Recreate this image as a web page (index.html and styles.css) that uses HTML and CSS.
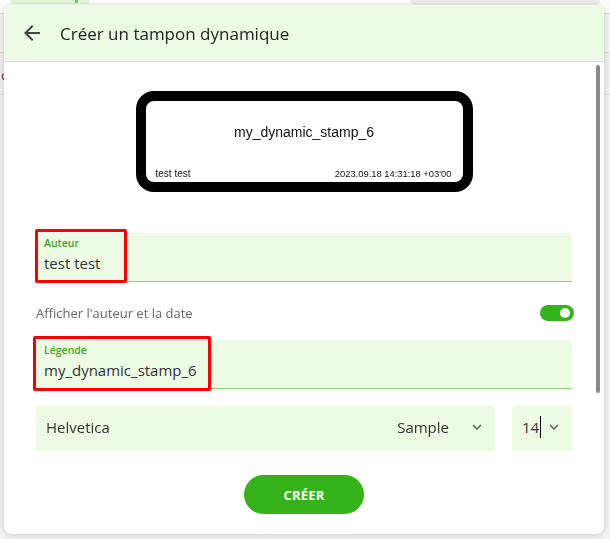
FILE: index.html
```html
<!DOCTYPE html>
<html lang="fr">
<head>
    <meta charset="UTF-8">
    <meta name="viewport" content="width=device-width, initial-scale=1.0">
    <title>Créer un tampon dynamique</title>
    <link rel="stylesheet" href="styles.css">
</head>
<body>
    <div class="page">
        <div class="top-strip">
            <span class="pill-green"><span class="dot"></span></span>
            <span class="pill-grey"></span>
        </div>
        <div class="toolbar"></div>
        <div class="subbar">c</div>
    </div>

    <div class="dialog">
        <header class="dialog-head">
            <svg class="back" width="24" height="24" viewBox="0 0 24 24">
                <path d="M20 11H7.83l5.59-5.59L12 4l-8 8 8 8 1.41-1.41L7.83 13H20v-2z" fill="#444"/>
            </svg>
            <h1>Créer un tampon dynamique</h1>
        </header>

        <div class="dialog-body">
            <div class="stamp">
                <div class="stamp-title">my_dynamic_stamp_6</div>
                <div class="stamp-foot">
                    <span>test test</span>
                    <span class="stamp-date">2023.09.18 14:31:18 +03'00</span>
                </div>
            </div>

            <div class="field">
                <span class="mark mark-author"></span>
                <label>Auteur</label>
                <div class="value">test test</div>
            </div>

            <div class="toggle-row">
                <span>Afficher l'auteur et la date</span>
                <span class="toggle"><span class="knob"></span></span>
            </div>

            <div class="field">
                <span class="mark mark-caption"></span>
                <label>Légende</label>
                <div class="value">my_dynamic_stamp_6</div>
            </div>

            <div class="font-row">
                <div class="select select-font">
                    <span class="grow">Helvetica</span>
                    <span class="sample">Sample</span>
                    <svg class="chev" width="10" height="6" viewBox="0 0 10 6"><polyline points="1,1 5,5 9,1" fill="none" stroke="#666" stroke-width="1.6"/></svg>
                </div>
                <div class="select select-size">
                    <span class="grow">14<span class="caret"></span></span>
                    <svg class="chev" width="10" height="6" viewBox="0 0 10 6"><polyline points="1,1 5,5 9,1" fill="none" stroke="#666" stroke-width="1.6"/></svg>
                </div>
            </div>
        </div>

        <div class="scroll-thumb"></div>

        <footer class="dialog-foot">
            <button>CRÉER</button>
        </footer>
    </div>
</body>
</html>
```

FILE: styles.css
```css
body { margin: 0; font-family: "Open Sans", "Noto Sans", sans-serif; background: #f3f3f3; height: 539px; overflow: hidden; }

.page { height: 539px; }
.top-strip { height: 13px; background: #fbfbfb; border-bottom: 1px solid #dcdcdc; display: flex; align-items: flex-start; }
.pill-green { width: 80px; height: 4px; margin-left: 10px; background: #e3f5d9; border-radius: 0 0 20px 20px; display: flex; justify-content: flex-end; }
.pill-green .dot { width: 3px; height: 3px; background: #7cc66c; margin-right: 12px; }
.pill-grey { width: 190px; height: 5px; margin-left: auto; margin-right: 10px; background: #ececec; border-radius: 0 0 20px 20px; }
.toolbar { height: 38px; background: #f3f3f3; border-bottom: 1px solid #dcdcdc; }
.subbar { height: 41px; background: #f0f0f0; border-bottom: 1px solid #dcdcdc; font-size: 13px; line-height: 44px; color: #333; padding-left: 1px; }

.dialog { position: fixed; top: 5px; left: 4px; width: 600px; height: 529px; background: #fff; border-radius: 8px; box-shadow: 0 1px 6px rgba(0,0,0,0.18); overflow: hidden; display: flex; flex-direction: column; }

.dialog-head { height: 56px; background: #ecfbe4; border-bottom: 1px solid #d3e6cb; display: flex; align-items: center; padding-left: 16px; gap: 16px; flex-shrink: 0; }
.dialog-head .back { display: block; }
.dialog-head h1 { margin: 0; font-size: 17px; font-weight: 400; color: #222; }

.dialog-body { height: 389px; overflow: hidden; padding: 29px 32px 0; box-sizing: border-box; flex-shrink: 0; }

.stamp { width: 337px; height: 101px; box-sizing: border-box; margin: 0 auto; border: 10px solid #000; border-radius: 18px; padding: 18px 10px 2px 10px; font-family: "Liberation Sans", Arial, sans-serif; color: #111; display: flex; flex-direction: column; }
.stamp-title { text-align: center; font-size: 14px; line-height: 26px; }
.stamp-foot { margin-top: auto; display: flex; justify-content: space-between; font-size: 10px; line-height: 12px; padding-right: 1px; }
.stamp-date { font-size: 9.4px; }

.field { position: relative; background: #edfbe4; border-bottom: 1px solid #8ccd7a; border-radius: 4px 4px 0 0; padding: 3px 8px 8px; }
.stamp + .field { margin-top: 41px; }
.field label { display: block; font-size: 10.5px; font-weight: 600; line-height: 14px; color: #3aa52a; }
.field .value { margin-top: 3px; font-size: 15px; line-height: 20px; color: #333; }

.mark { position: absolute; border: 3px solid #ff0000; border-radius: 2px; }
.mark-author { left: -1px; top: -4px; width: 86px; height: 48px; }
.mark-caption { left: -3px; top: -4px; width: 172px; height: 49px; }

.toggle-row { height: 58px; display: flex; align-items: center; justify-content: space-between; font-size: 13px; color: #666; padding-top: 3px; box-sizing: border-box; }
.toggle { width: 34px; height: 16px; border-radius: 8px; background: #35b21a; margin-right: -2px; display: flex; align-items: center; justify-content: flex-end; }
.toggle .knob { width: 10px; height: 10px; border-radius: 50%; background: #fff; margin-right: 4px; }

.font-row { margin-top: 17px; display: flex; gap: 17px; }
.select { height: 45px; box-sizing: border-box; background: #edfbe4; border-radius: 4px 4px 0 0; display: flex; align-items: center; padding: 0 13px 3px 10px; font-size: 15px; color: #333; }
.select-font { flex: 1; }
.select-size { width: 60px; }
.select .grow { flex: 1; display: flex; align-items: center; }
.select .sample { margin-right: 23px; }
.caret { display: inline-block; width: 1px; height: 22px; background: #000; margin-left: 1px; }

.scroll-thumb { position: absolute; left: 592px; top: 60px; width: 4px; height: 328px; border-radius: 2px; background: #8a8a8a; }

.dialog-foot { flex: 1; display: flex; justify-content: center; align-items: flex-start; padding-top: 24px; }
.dialog-foot button { width: 120px; height: 39px; border: none; border-radius: 20px; background: #35b21a; color: #fff; font-family: "Open Sans", sans-serif; font-weight: 700; font-size: 13px; letter-spacing: 0.2px; cursor: pointer; }
```
